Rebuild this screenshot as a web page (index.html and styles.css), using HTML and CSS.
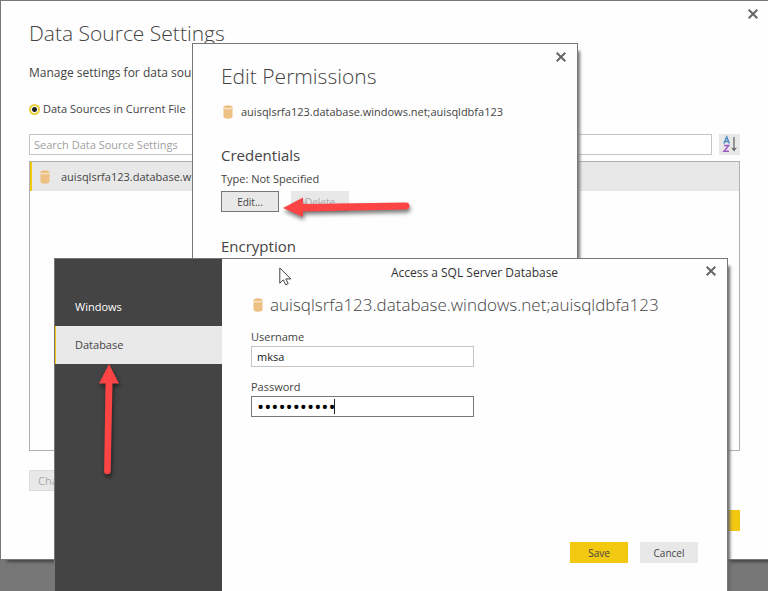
FILE: index.html
```html
<!DOCTYPE html>
<html lang="en">
<head>
<meta charset="utf-8">
<title>Data Source Settings</title>
<link rel="stylesheet" href="styles.css">
</head>
<body>
<svg class="defs" aria-hidden="true">
  <symbol id="db" viewBox="0 0 10 14"><path fill="#edc083" d="M.5 2.2C.5 1 2.500.3 5 .3S9.500 1 9.500 2.200v9.600c0 1.200-2 1.900-4.500 1.900S.5 13 .5 11.800z"/><path fill="none" stroke="#fbf3e6" d="M.8 3.200c1.200.9 7.200.9 8.400 0"/></symbol>
  <symbol id="x" viewBox="0 0 10 10"><path fill="none" stroke="#666" stroke-width="2" d="M.7.700l8.600 8.600M9.300.700L.7 9.300"/></symbol>
</svg>

<main class="window settings">
  <button class="close" aria-label="Close window"><svg><use href="#x"/></svg></button>
  <h1 class="title">Data Source Settings</h1>
  <p class="lead">Manage settings for data sources</p>
  <label class="scope"><input type="radio" name="scope" checked>Data Sources in Current File</label>
  <div class="search-row">
    <input class="field search" type="text" aria-label="Search" placeholder="Search Data Source Settings">
    <button class="sort" aria-label="Sort">
      <svg viewBox="0 0 21 21"><path fill="none" stroke="#4f8cc0" stroke-width="1.500" d="M5 9.500L7.700 3l2.700 6.500M6 7.500h3.500"/><path fill="none" stroke="#a05cc0" stroke-width="1.500" d="M5 11.500h4.700L5 17.200h5"/><path fill="none" stroke="#666" stroke-width="1.300" d="M15 3v12.500"/><path fill="#666" d="M12 13.500l3 1 3-1-3 4z"/></svg>
    </button>
  </div>
  <div class="list">
    <div class="list-item"><svg class="db"><use href="#db"/></svg><span>auisqlsrfa123.database.w</span></div>
  </div>
  <div class="tools"><button class="btn wide muted" disabled>Change</button></div>
  <div class="footer"><button class="btn primary">Close</button></div>
</main>

<section class="window permissions">
  <button class="close" aria-label="Close permissions"><svg><use href="#x"/></svg></button>
  <h2 class="title">Edit Permissions</h2>
  <div class="source"><svg class="db"><use href="#db"/></svg><span>auisqlsrfa123.database.windows.net;auisqldbfa123</span></div>
  <h3 class="heading">Credentials</h3>
  <p class="type">Type: Not Specified</p>
  <div class="actions"><button class="btn outlined">Edit...</button><button class="btn" disabled>Delete</button></div>
  <h3 class="heading">Encryption</h3>
</section>

<section class="window access">
  <nav class="side"><a href="#windows">Windows</a><a class="active" href="#database">Database</a></nav>
  <form class="panel">
    <button type="button" class="close" aria-label="Close access"><svg><use href="#x"/></svg></button>
    <h2 class="caption">Access a SQL Server Database</h2>
    <div class="server"><svg class="db"><use href="#db"/></svg><span>auisqlsrfa123.database.windows.net;auisqldbfa123</span></div>
    <label for="user">Username</label>
    <input class="field" id="user" type="text" value="mksa">
    <label for="pass">Password</label>
    <div class="secret"><input class="field focused" id="pass" type="password" value="abcdefghijk"><i class="caret"></i></div>
    <div class="buttons"><button type="button" class="btn primary">Save</button><button type="button" class="btn">Cancel</button></div>
  </form>
</section>

<svg class="arrow arrow-left" viewBox="0 0 136 32" aria-hidden="true"><path fill="#fc4445" d="M3 16L23 5.500v6.500l103-1.500a3.500 3.500 0 0 1 0 7L23 19.500V25z"/></svg>
<svg class="arrow arrow-up" viewBox="0 0 32 120" aria-hidden="true"><path fill="#fc4445" d="M16 3l10 19.500h-6.500L17.700 110a3.300 3.300 0 0 1-6.600 0L12.500 22.500H6z"/></svg>
<svg class="cursor" viewBox="0 0 13 19" aria-hidden="true"><path fill="#fff" stroke="#444" d="M.8 1v15.200l3.500-3.400 2.400 5 2.500-1.200-2.400-4.700h5z"/></svg>
</body>
</html>
```
FILE: styles.css
```css
* { box-sizing: border-box; }
body {
  margin: 0;
  min-height: 100vh;
  overflow: hidden;
  position: relative;
  background: #777;
  color: #444;
  font: 11px/16px "Open Sans", "Noto Sans", sans-serif;
}
h1, h2, h3, p { margin: 0; font-weight: 400; }
button, input { font: inherit; color: inherit; margin: 0; }
button { border: 0; padding: 0; }
.defs { position: absolute; width: 0; height: 0; }
.window { background: #fefefe; border: 1px solid #777; }
.close { position: absolute; background: none; width: 10px; height: 10px; }
.close svg { display: block; width: 10px; height: 10px; }
.db { width: 10px; height: 14px; flex: none; }
.title { font-size: 21px; font-weight: 300; line-height: 32px; }
.field { display: block; height: 21px; border: 1px solid #c4c4c4; background: #fff; padding: 0 4px; outline: 0; }
.btn { width: 58px; height: 21px; background: #e8e8e8; font-size: 10px; line-height: 16px; }
.btn:disabled { color: #aaa; }
.primary { background: #f2c811; }
.outlined { border: 1px solid #777; }

.settings { padding: 16px 28px 28px; border-right: 0; box-shadow: 6px 3px 3px -1px #444; }
.settings > .close { right: 10px; top: 9px; }
.lead { font-size: 12px; margin-top: 16px; }
.scope { display: flex; align-items: center; gap: 3px; margin-top: 20px; }
.scope input { appearance: none; width: 11px; height: 11px; border: 2px solid #f0cd38; border-radius: 50%; background: radial-gradient(circle, #222 0 2px, #fff 3px); }
.search-row { display: flex; gap: 7px; margin-top: 17px; }
.search { flex: 1; min-width: 0; }
.search::placeholder { color: #a0a0a0; opacity: 1; }
.sort { width: 21px; height: 21px; background: #e8e8e8; }
.sort svg { display: block; width: 21px; height: 21px; }
.list { margin-top: 6px; height: 290px; border: 1px solid #b0b0b0; }
.list-item { display: flex; align-items: center; gap: 11px; height: 29px; padding-left: 8px; border-left: 2px solid #f2c811; background: #e8e8e8; }
.tools { display: flex; margin-top: 19px; }
.wide { width: 96px; padding-left: 8px; text-align: left; font-size: 11px; }
.muted { border: 1px solid #ddd; }
.footer { display: flex; justify-content: flex-end; margin-top: 19px; }

.permissions { position: absolute; left: 192px; top: 43px; width: 386px; height: 440px; padding: 16px 28px; box-shadow: 3px 7px 3px -1px #777; }
.permissions > .close { right: 11px; top: 8px; }
.source { display: flex; align-items: center; gap: 8px; margin: 12px 0 0 2px; }
.heading { font-size: 15px; line-height: 22px; margin-top: 24px; }
.type { margin-top: 5px; }
.actions { display: flex; gap: 12px; margin-top: 4px; }
.actions + .heading { margin-top: 23px; }

.access { position: absolute; left: 54px; right: 40px; top: 258px; bottom: 0; display: flex; border-bottom: 0; box-shadow: 3px 7px 3px -1px #666; }
.side { width: 167px; background: #444; padding-top: 29px; }
.side a { display: block; padding: 11px 20px; color: #fff; text-decoration: none; }
.side .active { background: #e9e9e9; color: #444; border-left: 1px solid #f2c811; padding-left: 19px; }
.panel { position: relative; flex: 1; padding: 6px 29px 28px; display: flex; flex-direction: column; }
.panel > .close { right: 11px; top: 7px; }
.caption { font-size: 12px; line-height: 16px; text-align: center; color: #333; }
.server { display: flex; align-items: center; gap: 7px; margin: 10px 0 10px 2px; font-size: 17px; font-weight: 300; line-height: 28px; }
.panel .field { width: 223px; padding: 0 5px; color: #222; }
.panel label { margin-bottom: 1px; }
#user { margin-bottom: 12px; }
.secret { position: relative; }
.panel .focused { border-color: #777; color: #000; font-size: 19px; }
.caret { position: absolute; left: 83px; top: 3px; width: 1px; height: 15px; background: #222; }
.buttons { display: flex; justify-content: flex-end; gap: 12px; margin-top: auto; }

.arrow { position: absolute; filter: drop-shadow(1px 3px 2px #0008); }
.arrow-left { left: 280px; top: 192px; width: 136px; height: 32px; }
.arrow-up { left: 93px; top: 361px; width: 32px; height: 120px; }
.cursor { position: absolute; left: 279px; top: 267px; width: 13px; height: 19px; }
```
